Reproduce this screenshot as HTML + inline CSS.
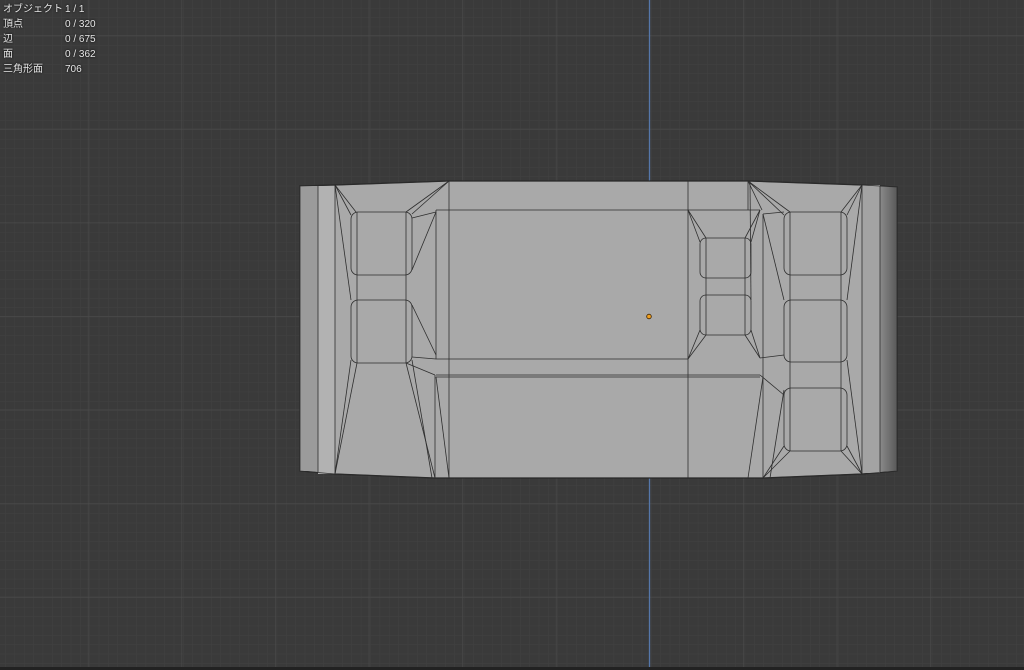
<!DOCTYPE html>
<html><head><meta charset="utf-8"><style>
html,body{margin:0;padding:0;background:#3a3a3a;width:1024px;height:670px;overflow:hidden}
#s{position:absolute;left:0;top:0}
.ov{position:absolute;left:3px;top:2px;width:200px;font:10px/15px "Liberation Sans","Noto Sans CJK JP",sans-serif;color:#e6e6e6;text-shadow:0 0 2px #000}
.ov div{height:15px;position:relative;white-space:nowrap}
.ov span{position:absolute;left:62px;white-space:nowrap}
</style></head><body>
<svg id="s" width="1024" height="670" viewBox="0 0 1024 670">
<defs>
<pattern id="mn" width="9.36" height="9.36" patternUnits="userSpaceOnUse" patternTransform="translate(5.2,7.9)">
<path d="M0 0H9.36M0 0V9.36" stroke="#414141" stroke-width="1" fill="none"/>
</pattern>
<pattern id="mj" width="93.6" height="93.6" patternUnits="userSpaceOnUse" patternTransform="translate(87.9,35.2)">
<path d="M0 0H93.6M0 0V93.6" stroke="#4b4b4b" stroke-width="1.2" fill="none"/>
</pattern>
<linearGradient id="rg" x1="0" x2="1"><stop offset="0" stop-color="#8a8a8a"/><stop offset="1" stop-color="#595959"/></linearGradient>
</defs>
<rect width="1024" height="670" fill="#3a3a3a"/>
<rect width="1024" height="670" fill="url(#mn)"/>
<rect width="1024" height="670" fill="url(#mj)"/>
<line x1="649.5" y1="0" x2="649.5" y2="670" stroke="#5577aa" stroke-width="1.3"/>
<rect y="667" width="1024" height="3" fill="#222"/>
<polygon points="300,186 335,185 449,181 748,181 862,185 897,187 897,471 862,474 763,478 435,478 335,474 300,471" fill="#a9a9a9" stroke="#222" stroke-width="1.2"/>
<rect x="300" y="186" width="18" height="285" fill="#9b9b9b"/>
<rect x="318" y="186" width="17" height="288" fill="#b2b2b2"/>
<polygon points="880,186 897,187 897,471 880,472" fill="url(#rg)"/>
<rect x="862" y="185" width="18" height="288" fill="#a3a3a3"/>
<g stroke="#2e2e2e" stroke-width="0.8" fill="none">
<polyline points="300,186 335,185 449,181 748,181 862,185 897,187 897,471 862,474 763,478 435,478 335,474 300,471 300,186"/>
<line x1="318" y1="186" x2="318" y2="472"/>
<line x1="335" y1="185" x2="335" y2="474"/>
<line x1="862" y1="185" x2="862" y2="474"/>
<line x1="880" y1="186" x2="880" y2="472"/>
<line x1="449" y1="181" x2="449" y2="478"/>
<line x1="688" y1="181" x2="688" y2="478"/>
<line x1="748" y1="181" x2="748" y2="210"/>
<polyline points="436,210 688,210 760,210"/>
<line x1="436" y1="210" x2="436" y2="359"/>
<line x1="436" y1="359" x2="688" y2="359"/>
<line x1="436" y1="375" x2="760" y2="375"/>
<line x1="436" y1="377" x2="760" y2="377"/>
<line x1="435" y1="375" x2="435" y2="478"/>
<line x1="763" y1="214" x2="763" y2="478"/>
<line x1="760" y1="358" x2="784" y2="355"/>
<line x1="760" y1="375" x2="784" y2="395"/>
<rect x="351" y="212" width="61" height="63" rx="7"/>
<rect x="351" y="300" width="61" height="63" rx="7"/>
<line x1="357" y1="212" x2="357" y2="363"/>
<line x1="406" y1="212" x2="406" y2="363"/>
<line x1="335" y1="185" x2="351" y2="215"/><line x1="335" y1="185" x2="356" y2="212"/>
<line x1="335" y1="185" x2="351" y2="300"/><line x1="335" y1="474" x2="351" y2="360"/>
<line x1="335" y1="474" x2="357" y2="363"/>
<line x1="449" y1="181" x2="406" y2="212"/><line x1="449" y1="181" x2="412" y2="214"/>
<line x1="412" y1="218" x2="436" y2="212"/><line x1="412" y1="270" x2="436" y2="212"/>
<line x1="412" y1="305" x2="436" y2="355"/><line x1="412" y1="357" x2="436" y2="359"/>
<line x1="406" y1="363" x2="435" y2="375"/><line x1="406" y1="363" x2="435" y2="478"/>
<line x1="412" y1="360" x2="432" y2="478"/>
<line x1="436" y1="377" x2="449" y2="478"/>
<rect x="700" y="238" width="51" height="40" rx="6"/>
<rect x="700" y="295" width="51" height="40" rx="6"/>
<line x1="706" y1="238" x2="706" y2="335"/><line x1="745" y1="238" x2="745" y2="335"/>
<line x1="688" y1="210" x2="700" y2="242"/><line x1="688" y1="210" x2="706" y2="238"/>
<line x1="688" y1="359" x2="700" y2="330"/><line x1="688" y1="359" x2="706" y2="335"/>
<line x1="760" y1="210" x2="751" y2="242"/><line x1="760" y1="210" x2="745" y2="238"/>
<line x1="750" y1="181" x2="751" y2="300"/><line x1="748" y1="181" x2="762" y2="210"/>
<line x1="760" y1="358" x2="751" y2="330"/><line x1="760" y1="358" x2="745" y2="335"/>
<line x1="763" y1="377" x2="748" y2="478"/>
<rect x="784" y="212" width="63" height="63" rx="7"/>
<rect x="784" y="300" width="63" height="62" rx="7"/>
<rect x="784" y="388" width="63" height="63" rx="7"/>
<line x1="790" y1="212" x2="790" y2="451"/><line x1="841" y1="212" x2="841" y2="451"/>
<line x1="748" y1="181" x2="784" y2="215"/><line x1="748" y1="181" x2="790" y2="212"/>
<line x1="763" y1="214" x2="784" y2="212"/><line x1="763" y1="214" x2="784" y2="300"/>
<line x1="862" y1="185" x2="847" y2="215"/><line x1="862" y1="185" x2="841" y2="212"/>
<line x1="862" y1="185" x2="847" y2="300"/>
<line x1="862" y1="474" x2="847" y2="446"/><line x1="862" y1="474" x2="841" y2="451"/>
<line x1="862" y1="474" x2="847" y2="360"/>
<line x1="763" y1="478" x2="784" y2="446"/><line x1="763" y1="478" x2="790" y2="451"/>
<line x1="770" y1="478" x2="784" y2="390"/>
</g>
<circle cx="649" cy="316.5" r="2.3" fill="#f0a020" stroke="#3a2000" stroke-width="0.8"/>
</svg>
<div class="ov">
<div>オブジェクト<span>1 / 1</span></div>
<div>頂点<span>0 / 320</span></div>
<div>辺<span>0 / 675</span></div>
<div>面<span>0 / 362</span></div>
<div>三角形面<span>706</span></div>
</div>
</body></html>
